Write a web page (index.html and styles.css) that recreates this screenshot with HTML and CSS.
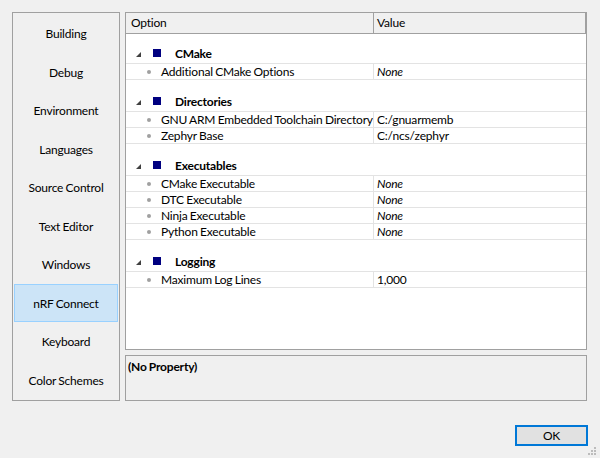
FILE: index.html
```html
<!DOCTYPE html>
<html>
<head>
<meta charset="utf-8">
<link rel="stylesheet" href="styles.css">
</head>
<body>
<div class="dialog">
  <div class="main">
    <nav class="cats">
      <div class="cat">Building</div>
      <div class="cat">Debug</div>
      <div class="cat">Environment</div>
      <div class="cat">Languages</div>
      <div class="cat">Source Control</div>
      <div class="cat">Text Editor</div>
      <div class="cat">Windows</div>
      <div class="cat selected">nRF Connect</div>
      <div class="cat">Keyboard</div>
      <div class="cat">Color Schemes</div>
    </nav>
    <div class="right">
      <div class="grid">
        <div class="head">
          <div class="hcell">Option</div>
          <div class="hcell hval">Value</div>
        </div>
        <div class="body">
          <div class="group first">
            <div class="glabel"><svg class="tri" width="5" height="5" viewBox="0 0 5 5"><polygon points="5,0 5,5 0,5"/></svg><span class="sq"></span><b>CMake</b></div>
          </div>
          <div class="row"><div class="opt"><span class="dot"></span>Additional CMake Options</div><div class="val none">None</div></div>

          <div class="group">
            <div class="glabel"><svg class="tri" width="5" height="5" viewBox="0 0 5 5"><polygon points="5,0 5,5 0,5"/></svg><span class="sq"></span><b>Directories</b></div>
          </div>
          <div class="row"><div class="opt"><span class="dot"></span>GNU ARM Embedded Toolchain Directory</div><div class="val">C:/gnuarmemb</div></div>
          <div class="row"><div class="opt"><span class="dot"></span>Zephyr Base</div><div class="val">C:/ncs/zephyr</div></div>

          <div class="group">
            <div class="glabel"><svg class="tri" width="5" height="5" viewBox="0 0 5 5"><polygon points="5,0 5,5 0,5"/></svg><span class="sq"></span><b>Executables</b></div>
          </div>
          <div class="row"><div class="opt"><span class="dot"></span>CMake Executable</div><div class="val none">None</div></div>
          <div class="row"><div class="opt"><span class="dot"></span>DTC Executable</div><div class="val none">None</div></div>
          <div class="row"><div class="opt"><span class="dot"></span>Ninja Executable</div><div class="val none">None</div></div>
          <div class="row"><div class="opt"><span class="dot"></span>Python Executable</div><div class="val none">None</div></div>

          <div class="group">
            <div class="glabel"><svg class="tri" width="5" height="5" viewBox="0 0 5 5"><polygon points="5,0 5,5 0,5"/></svg><span class="sq"></span><b>Logging</b></div>
          </div>
          <div class="row"><div class="opt"><span class="dot"></span>Maximum Log Lines</div><div class="val">1,000</div></div>
        </div>
      </div>
      <div class="desc"><b>(No Property)</b></div>
    </div>
  </div>
  <div class="footer">
    <button class="ok">OK</button>
  </div>
  <svg class="grip" width="9" height="9" viewBox="0 0 9 9">
    <rect x="6" y="0" width="2" height="2"/>
    <rect x="3" y="3" width="2" height="2"/>
    <rect x="6" y="3" width="2" height="2"/>
    <rect x="0" y="6" width="2" height="2"/>
    <rect x="3" y="6" width="2" height="2"/>
    <rect x="6" y="6" width="2" height="2"/>
  </svg>
</div>
</body>
</html>
```
FILE: styles.css
```css
* { box-sizing: border-box; }
html, body { margin: 0; padding: 0; }
body {
  background: #f0f0f0;
  font-family: Lato, "Liberation Sans", sans-serif;
  font-size: 12px;
  letter-spacing: -0.2px;
  word-spacing: -0.5px;
  color: #000;
  width: 600px;
  height: 458px;
  overflow: hidden;
}
.dialog {
  position: relative;
  width: 600px;
  height: 458px;
  padding: 12px 12px 0 12px;
}
.main {
  display: flex;
  gap: 5px;
  width: 575px;
  height: 389px;
}
.cats {
  width: 108px;
  height: 389px;
  border: 1px solid #a0a0a0;
  padding: 1px;
  display: flex;
  flex-direction: column;
}
.cat {
  height: 38.5px;
  flex: none;
  display: flex;
  align-items: center;
  justify-content: center;
  padding-top: 1px;
  border: 1px solid transparent;
}
.cat.selected {
  background: #cce4f7;
  border-color: #99d1ff;
}
.right {
  flex: 1;
  display: flex;
  flex-direction: column;
  gap: 5px;
}
.grid {
  height: 338px;
  border: 1px solid #a0a0a0;
  background: #fff;
  display: flex;
  flex-direction: column;
}
.head {
  display: grid;
  grid-template-columns: 247px 1fr;
  height: 21px;
  background: #f0f0f0;
  border-bottom: 1px solid #a0a0a0;
  border-right: 1px solid #a0a0a0;
}
.hcell {
  padding-left: 5px;
  line-height: 20px;
}
.hcell.hval {
  border-left: 1px solid #a0a0a0;
  padding-left: 3px;
}
.group {
  height: 32px;
  border-bottom: 1px solid #e3e3e3;
  display: flex;
  align-items: flex-end;
}
.group.first { height: 30px; }
.glabel {
  height: 16px;
  margin-bottom: 2px;
  display: flex;
  align-items: center;
  padding-left: 10px;
}
.tri { fill: #404040; margin-top: 2px; }
.sq {
  width: 8px;
  height: 8px;
  background: #000080;
  margin-left: 12px;
  margin-right: 14px;
}
.row {
  display: grid;
  grid-template-columns: 247px 1fr;
  height: 16px;
  border-bottom: 1px solid #e3e3e3;
}
.opt {
  display: flex;
  align-items: center;
  padding-left: 21px;
  white-space: nowrap;
  overflow: hidden;
}
.dot {
  width: 4px;
  height: 4px;
  border-radius: 50%;
  background: #a0a0a0;
  margin-right: 10px;
  flex: none;
}
.val {
  border-left: 1px solid #e3e3e3;
  padding-left: 3px;
  display: flex;
  align-items: center;
  white-space: nowrap;
}
.val.none { font-style: italic; }
.desc {
  height: 46px;
  border: 1px solid #a0a0a0;
  background: #f0f0f0;
  padding: 3px 0 0 2px;
}
.footer {
  display: flex;
  justify-content: flex-end;
  margin-top: 24px;
}
.ok {
  width: 73px;
  height: 21px;
  border: 2px solid #0078d7;
  background: #e1e1e1;
  font-family: inherit;
  font-size: 12px;
  letter-spacing: inherit;
  color: #000;
  padding: 0;
}
.grip {
  position: absolute;
  right: 3px;
  bottom: 2px;
  fill: #bcbcbc;
}
```
